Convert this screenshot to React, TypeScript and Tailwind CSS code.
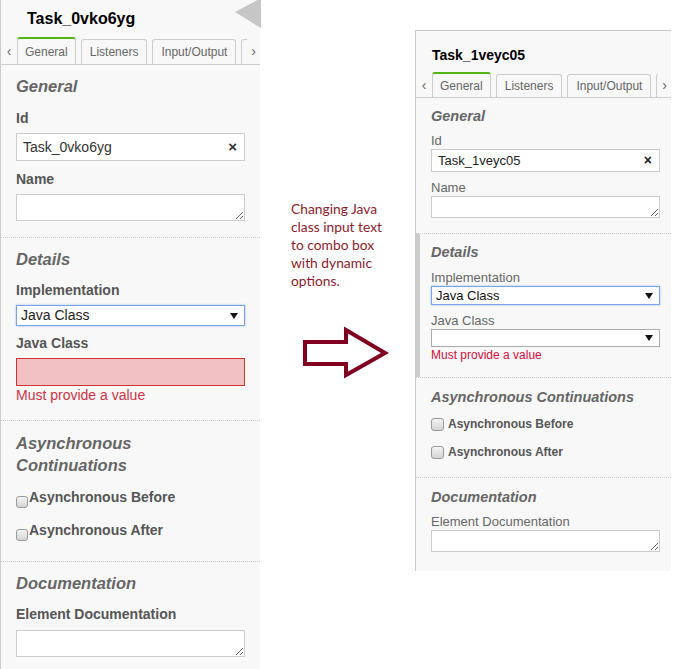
import React from "react";

const TAB_NAMES = ["General", "Listeners", "Input/Output"];

function Tabs({ h }: { h: string }) {
  return (
    <div className={`relative border-b border-[#ccc] ${h}`}>
      <div className="flex h-full items-end overflow-hidden">
        <div className="w-[16px] shrink-0 self-center text-center text-[14px] leading-[16px] text-[#666]">‹</div>
        {TAB_NAMES.map((name, i) =>
          i === 0 ? (
            <div
              key={name}
              className="relative -mb-px flex h-[calc(100%+1px)] shrink-0 items-center rounded-t-[3px] border-x border-t-2 border-[#ccc] border-t-[#52b415] bg-[#f8f8f8] px-[7px] text-[12px] text-[#666]"
            >
              {name}
            </div>
          ) : (
            <div
              key={name}
              className="ml-[5px] flex h-[calc(100%-2px)] shrink-0 items-center rounded-t-[3px] border border-b-0 border-[#ccc] bg-[#f8f8f8] px-[8px] text-[12px] text-[#666]"
            >
              {name}
            </div>
          )
        )}
        <div className="ml-[5px] flex h-[calc(100%-2px)] w-[40px] shrink-0 items-center rounded-t-[3px] border border-b-0 border-[#ccc] bg-[#f8f8f8] pl-[6px]">
          <span className="h-[10px] w-[2px] bg-[#f3ecb8]" />
        </div>
      </div>
      <div className="absolute right-0 top-0 flex h-full w-[13px] items-center justify-center bg-[#f8f8f8] text-[14px] leading-[16px] text-[#666]">›</div>
    </div>
  );
}

function Arrow() {
  return (
    <svg width="8" height="6" viewBox="0 0 8 6">
      <polygon points="0,0 8,0 4,6" fill="#111" />
    </svg>
  );
}

function Checkbox({ size }: { size: string }) {
  return <span className={`inline-block shrink-0 rounded-[3px] border border-[#999] bg-linear-to-b from-[#f4f4f4] to-[#d4d4d4] ${size}`} />;
}

function OldPanel() {
  const heading = "text-[16.5px] leading-[20px] font-bold italic text-[#666]";
  const label = "h-[17px] text-[14px] leading-[17px] font-bold text-[#555]";
  return (
    <div className="relative h-[669px] w-[260px] shrink-0 border-l border-[#ccc] bg-[#f8f8f8]">
      <svg className="absolute left-[233px] top-0" width="27" height="30" viewBox="0 0 27 30">
        <polygon points="1,12 27,-2 27,28" fill="#c6c6c6" />
      </svg>
      <div className="h-[37px] pl-[26px] pt-[9px] text-[16px] leading-[19px] font-bold text-black">Task_0vko6yg</div>
      <Tabs h="h-[28px]" />

      {/* General */}
      <div className="pl-[15px] pr-[15px] pt-[11px] pb-[16px]">
        <div className={heading}>General</div>
        <div className={`mt-[14px] ${label}`}>Id</div>
        <div className="mt-[6px] flex h-[28px] items-center justify-between border border-[#ccc] bg-white pl-[6px] pr-[7px] text-[14px] text-[#333]">
          <span>Task_0vko6yg</span>
          <span className="text-[15px] font-bold text-[#333]">×</span>
        </div>
        <div className={`mt-[10px] ${label}`}>Name</div>
        <textarea readOnly className="mt-[6px] block h-[27px] w-full border border-[#ccc] bg-white" />
      </div>

      {/* Details */}
      <div className="border-t border-dotted border-[#ccc] pl-[15px] pr-[15px] pt-[11px] pb-[17px]">
        <div className={heading}>Details</div>
        <div className={`mt-[13px] ${label}`}>Implementation</div>
        <div className="mt-[6px] flex h-[21px] items-center justify-between border border-[#7aa3e5] bg-white pl-[4px] pr-[6px] text-[14px] text-[#222] shadow-[0_0_2px_#9dbcee]">
          <span>Java Class</span>
          <Arrow />
        </div>
        <div className={`mt-[9px] ${label}`}>Java Class</div>
        <div className="mt-[6px] h-[28px] border border-[#cc3333] bg-[#f2c2c2]" />
        <div className="mt-[1px] h-[16px] text-[14px] leading-[16px] text-[#cc3344]">Must provide a value</div>
      </div>

      {/* Async */}
      <div className="border-t border-dotted border-[#ccc] pl-[15px] pr-[15px] pt-[11px] pb-[22px]">
        <div className="text-[16.5px] leading-[22px] font-bold italic text-[#666]">
          Asynchronous
          <br />
          Continuations
        </div>
        <div className={`mt-[13px] flex items-start ${label}`}>
          <span className="mt-[7px] mr-[1px] flex">
            <Checkbox size="h-[12px] w-[12px]" />
          </span>
          Asynchronous Before
        </div>
        <div className={`mt-[16px] flex items-start ${label}`}>
          <span className="mt-[7px] mr-[1px] flex">
            <Checkbox size="h-[12px] w-[12px]" />
          </span>
          Asynchronous After
        </div>
      </div>

      {/* Documentation */}
      <div className="border-t border-dotted border-[#ccc] pl-[15px] pr-[15px] pt-[11px]">
        <div className={heading}>Documentation</div>
        <div className={`mt-[13px] ${label}`}>Element Documentation</div>
        <textarea readOnly className="mt-[7px] block h-[27px] w-full border border-[#ccc] bg-white" />
      </div>
    </div>
  );
}

function NewPanel() {
  const heading = "h-[17px] text-[14.5px] leading-[17px] font-bold italic text-[#666]";
  const label = "h-[16px] text-[13px] leading-[16px] text-[#666]";
  return (
    <div className="mt-[30px] h-[541px] w-[256px] shrink-0 border-l border-t border-[#c8c8c8] bg-[#f8f8f8]">
      <div className="h-[33px] pl-[16px] pt-[16px] text-[14px] leading-[17px] font-bold text-black">Task_1veyc05</div>
      <div className="mt-[8px]">
        <Tabs h="h-[26px]" />
      </div>

      {/* General */}
      <div className="pl-[15px] pr-[11px] pt-[10px] pb-[15px]">
        <div className={heading}>General</div>
        <div className={`mt-[8px] ${label}`}>Id</div>
        <div className="flex h-[23px] items-center justify-between border border-[#ccc] bg-white pl-[6px] pr-[7px] text-[13px] text-[#222]">
          <span>Task_1veyc05</span>
          <span className="text-[14px] font-bold text-[#222]">×</span>
        </div>
        <div className={`mt-[8px] ${label}`}>Name</div>
        <textarea readOnly className="block h-[22px] w-full border border-[#ccc] bg-white" />
      </div>

      {/* Details */}
      <div className="border-t border-l-4 border-dotted border-t-[#ccc] border-l-[#ccc] pl-[11px] pr-[11px] pt-[10px] pb-[15px]" style={{ borderLeftStyle: "solid" }}>
        <div className={heading}>Details</div>
        <div className={`mt-[9px] ${label}`}>Implementation</div>
        <div className="flex h-[19px] items-center justify-between border border-[#7aa3e5] bg-white pl-[4px] pr-[6px] text-[13px] text-[#111] shadow-[0_0_2px_#9dbcee]">
          <span>Java Class</span>
          <Arrow />
        </div>
        <div className={`mt-[8px] ${label}`}>Java Class</div>
        <div className="flex h-[18px] items-center justify-end border border-[#aaa] bg-white pr-[6px]">
          <Arrow />
        </div>
        <div className="mt-[1px] h-[14px] text-[12px] leading-[14px] text-[#d0103a]">Must provide a value</div>
      </div>

      {/* Async */}
      <div className="border-t border-dotted border-[#ccc] pl-[15px] pr-[11px] pt-[11px] pb-[17px]">
        <div className={heading}>Asynchronous Continuations</div>
        <div className="mt-[10px] flex h-[16px] items-center gap-[4px] text-[12px] font-bold text-[#555]">
          <Checkbox size="h-[13px] w-[13px]" />
          Asynchronous Before
        </div>
        <div className="mt-[12px] flex h-[16px] items-center gap-[4px] text-[12px] font-bold text-[#555]">
          <Checkbox size="h-[13px] w-[13px]" />
          Asynchronous After
        </div>
      </div>

      {/* Documentation */}
      <div className="border-t border-dotted border-[#ccc] pl-[15px] pr-[11px] pt-[11px]">
        <div className={heading}>Documentation</div>
        <div className={`mt-[8px] ${label}`}>Element Documentation</div>
        <textarea readOnly className="block h-[22px] w-full border border-[#ccc] bg-white" />
      </div>
    </div>
  );
}

export default function App() {
  return (
    <div className="flex h-[669px] w-[675px] items-start overflow-hidden bg-white font-['Liberation_Sans',Arial,sans-serif]">
      <OldPanel />
      <div className="w-[155px] shrink-0 pt-[200px]">
        <p className="pl-[31px] font-['Lato','Noto_Sans',sans-serif] text-[13.8px] leading-[18px] text-[#8c1c2c]">
          Changing Java
          <br />
          class input text
          <br />
          to combo box
          <br />
          with dynamic
          <br />
          options.
        </p>
        <svg className="ml-[41px] mt-[36px] block" width="90" height="54" viewBox="0 0 90 54">
          <polygon points="4,16 45,16 45,4 84,27 45,49 45,38 4,38" fill="none" stroke="#7f0021" strokeWidth="4" strokeLinejoin="miter" />
        </svg>
      </div>
      <NewPanel />
    </div>
  );
}
